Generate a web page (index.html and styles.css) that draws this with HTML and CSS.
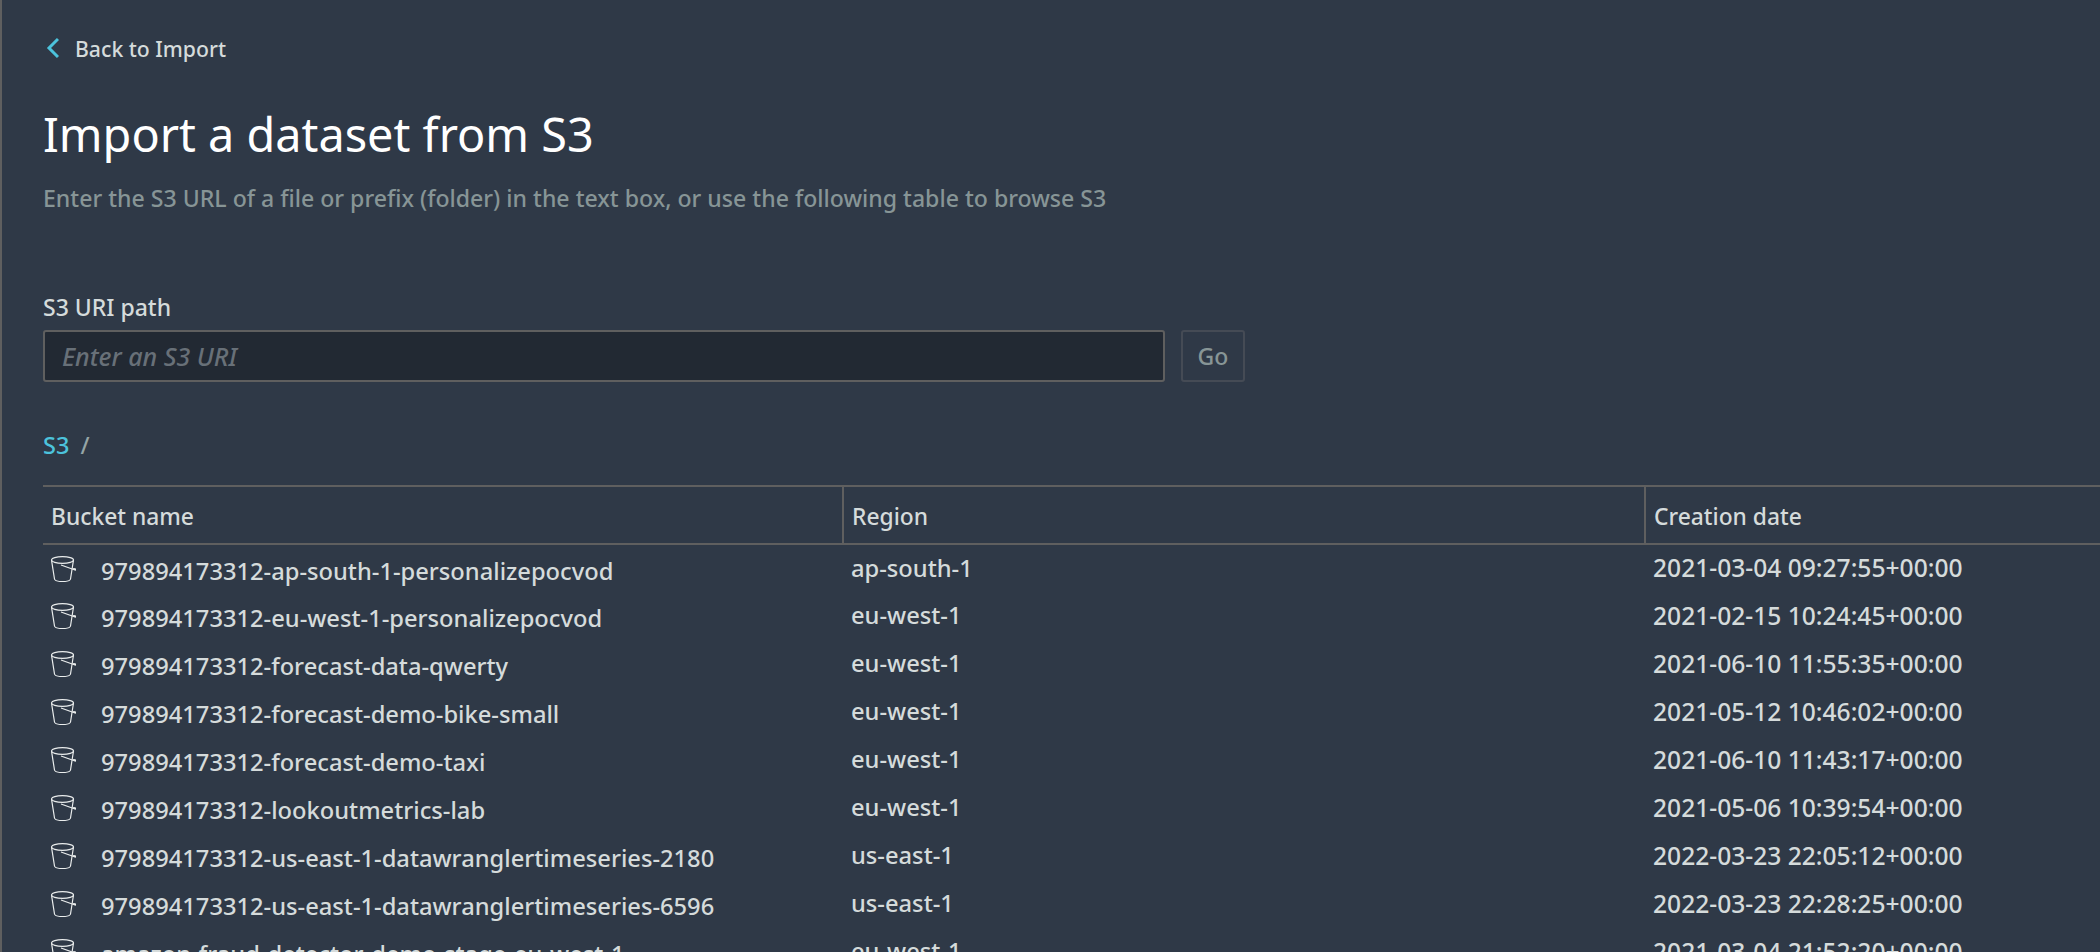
FILE: index.html
```html
<!DOCTYPE html>
<html lang="en">
  <head>
    <meta charset="UTF-8" />
    <title>Import a dataset from S3</title>
    <link rel="stylesheet" href="styles.css">
  </head>
  <body>
    <svg class="defs" width="0" height="0">
      <symbol id="bucket" viewBox="0 0 25 26">
        <ellipse cx="11.500" cy="4" rx="11" ry="3.300" />
        <path d="M.5 4l3 19c.3 1.500 3.500 2.500 8 2.500s7.700-1 8-2.500l3-19" />
        <path d="M10 9l14 5c.7.300.7-1 .2-1.200-.4-.2-1.500-.2-2-.2" />
      </symbol>
    </svg>
    <main class="page">
      <a class="back" href="#">
        <svg class="back-icon" width="14" height="22" viewBox="0 0 14 22"><path d="M13 2L4 11l9 9" /></svg>
        Back to Import
      </a>
      <h1>Import a dataset from S3</h1>
      <p class="sub">Enter the S3 URL of a file or prefix (folder) in the text box, or use the following table to browse S3</p>

      <label class="field-label" for="uri">S3 URI path</label>
      <div class="uri-row">
        <input id="uri" type="text" placeholder="Enter an S3 URI">
        <button disabled>Go</button>
      </div>

      <div class="crumbs"><a href="#">S3</a> <span>/</span></div>

      <table>
        <thead>
          <tr><th class="c1">Bucket name</th><th class="c2">Region</th><th>Creation date</th></tr>
        </thead>
        <tbody>
          <tr><td><div class="name"><svg class="bucket"><use href="#bucket" /></svg>979894173312-ap-south-1-personalizepocvod</div></td><td>ap-south-1</td><td class="date">2021-03-04 09:27:55+00:00</td></tr>
          <tr><td><div class="name"><svg class="bucket"><use href="#bucket" /></svg>979894173312-eu-west-1-personalizepocvod</div></td><td>eu-west-1</td><td class="date">2021-02-15 10:24:45+00:00</td></tr>
          <tr><td><div class="name"><svg class="bucket"><use href="#bucket" /></svg>979894173312-forecast-data-qwerty</div></td><td>eu-west-1</td><td class="date">2021-06-10 11:55:35+00:00</td></tr>
          <tr><td><div class="name"><svg class="bucket"><use href="#bucket" /></svg>979894173312-forecast-demo-bike-small</div></td><td>eu-west-1</td><td class="date">2021-05-12 10:46:02+00:00</td></tr>
          <tr><td><div class="name"><svg class="bucket"><use href="#bucket" /></svg>979894173312-forecast-demo-taxi</div></td><td>eu-west-1</td><td class="date">2021-06-10 11:43:17+00:00</td></tr>
          <tr><td><div class="name"><svg class="bucket"><use href="#bucket" /></svg>979894173312-lookoutmetrics-lab</div></td><td>eu-west-1</td><td class="date">2021-05-06 10:39:54+00:00</td></tr>
          <tr><td><div class="name"><svg class="bucket"><use href="#bucket" /></svg>979894173312-us-east-1-datawranglertimeseries-2180</div></td><td>us-east-1</td><td class="date">2022-03-23 22:05:12+00:00</td></tr>
          <tr><td><div class="name"><svg class="bucket"><use href="#bucket" /></svg>979894173312-us-east-1-datawranglertimeseries-6596</div></td><td>us-east-1</td><td class="date">2022-03-23 22:28:25+00:00</td></tr>
          <tr><td><div class="name"><svg class="bucket"><use href="#bucket" /></svg>amazon-fraud-detector-demo-stage-eu-west-1</div></td><td>eu-west-1</td><td class="date">2021-03-04 21:52:20+00:00</td></tr>
        </tbody>
      </table>
    </main>
  </body>
</html>
```

FILE: styles.css
```css
* {
  box-sizing: border-box;
  margin: 0;
  padding: 0;
}

html, body {
  height: 100%;
  overflow: hidden;
}

body {
  background-color: #2f3947;
  color: #d5dbdb;
  font-family: "Noto Sans", sans-serif;
  font-size: 23px;
  font-weight: 500;
}

.defs {
  position: absolute;
}

.page {
  height: 952px;
  overflow: hidden;
  padding: 31px 0 0 41px;
  border-left: 2px solid #5f5f5f;
}

.back {
  display: flex;
  align-items: center;
  gap: 16px;
  height: 34px;
  margin-left: 2px;
  color: #d5dbdb;
  font-size: 21.2px;
  text-decoration: none;
}

.back-icon path {
  fill: none;
  stroke: #4cc3dc;
  stroke-width: 3;
}

h1 {
  margin-top: 32px;
  color: #fff;
  font-size: 46.8px;
  font-weight: 400;
  line-height: 74px;
}

.sub {
  color: #879596;
  font-size: 23.1px;
  line-height: 30px;
  margin-top: 12px;
}

.field-label {
  display: block;
  margin-top: 79px;
  font-size: 23px;
  line-height: 30px;
}

.uri-row {
  display: flex;
  gap: 16px;
  margin-top: 8px;
}

input {
  width: 1122px;
  height: 52px;
  padding: 0 17px;
  background-color: #222933;
  border: 2px solid #5f5f5f;
  border-radius: 3px;
  color: #d5dbdb;
  font: inherit;
  font-size: 25px;
  outline: 0;
}

input::placeholder {
  color: #687078;
  font-style: italic;
}

button {
  width: 64px;
  height: 52px;
  background: none;
  border: 2px solid #454b55;
  border-radius: 3px;
  color: #879596;
  font: inherit;
}

.crumbs {
  margin-top: 48px;
  line-height: 30px;
  color: #95a5a6;
  font-size: 23.5px;
}

.crumbs a {
  color: #4cc3dc;
  text-decoration: none;
}

.crumbs span {
  margin-left: 5px;
}

table {
  width: 2100px;
  margin-top: 25px;
  border-collapse: collapse;
  table-layout: fixed;
}

th {
  height: 58px;
  padding: 2px 8px 0;
  border-top: 2px solid #5f5f5f;
  border-bottom: 2px solid #5f5f5f;
  border-left: 2px solid #5f5f5f;
  font-size: 22.8px;
  font-weight: 500;
  text-align: left;
}

th:first-child {
  border-left: 0;
}

.c1 {
  width: 800px;
}

.c2 {
  width: 802px;
}

td {
  height: 48px;
  padding: 0 8px 2px;
  font-size: 23.7px;
  vertical-align: middle;
}

td.date {
  font-size: 24.6px;
}

.name {
  display: flex;
  align-items: center;
  gap: 25px;
  padding-top: 6px;
}

.bucket {
  width: 25px;
  height: 26px;
  margin-top: -4px;
  flex: none;
  fill: none;
  stroke: #eaeded;
  stroke-width: 1.2;
}
```
